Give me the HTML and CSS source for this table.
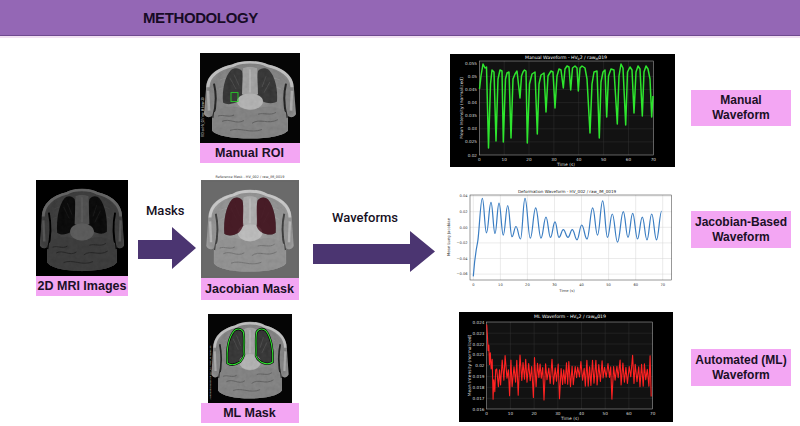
FILE: index.html
```html
<!DOCTYPE html>
<html lang="en">
<head>
<meta charset="utf-8">
<title>Methodology</title>
<link rel="stylesheet" href="styles.css">
</head>
<body>
<svg class="defs" aria-hidden="true">
  <defs>
    <path id="lungL" d="M31 19 C25 26 22 40 23 55 C27 58 33 57 38 54 C40 52 42 49 43 46 C42 38 44 28 42 20 C39 16 34 16 31 19 Z"/>
    <path id="lungR" d="M69 19 C75 26 78 40 77 54 C73 57 67 56 63 54 C60 52 58 50 57 47 C58 38 56 28 58 20 C61 16 66 16 69 19 Z"/>
    <path id="bodyP" d="M6 40 C6 24 18 16 32 13 C40 8 60 8 68 13 C82 16 94 24 94 40 L96 68 C94 72 90 72 88 70 L88 86 C80 98 20 98 12 86 L12 70 C10 72 6 72 4 68 Z"/>
    <clipPath id="bodyClip"><use href="#bodyP"/></clipPath>
    <radialGradient id="bodyG" cx="50%" cy="50%" r="62%">
      <stop offset="0" stop-color="#8e8e8e"/>
      <stop offset=".75" stop-color="#7a7a7a"/>
      <stop offset="1" stop-color="#a8a8a8"/>
    </radialGradient>
    <filter id="soft" x="-5%" y="-5%" width="110%" height="110%"><feGaussianBlur stdDeviation="0.7"/></filter>
    <filter id="grain" x="0" y="0" width="100%" height="100%">
      <feTurbulence type="fractalNoise" baseFrequency="0.22" numOctaves="2" seed="7"/>
      <feColorMatrix type="saturate" values="0"/>
      <feComponentTransfer><feFuncA type="linear" slope="0" intercept="1"/></feComponentTransfer>
    </filter>
    <g id="chest">
      <rect class="scan-bg" width="100" height="100"/>
      <g filter="url(#soft)">
        <use href="#bodyP" fill="url(#bodyG)"/>
        <path d="M8 38 C8 25 20 17 33 14 C41 9 59 9 67 14 C80 17 92 25 92 38" fill="none" stroke="#d2d2d2" stroke-width="3" opacity=".75"/>
        <path d="M8 42 L9 64 M92 42 L91 64" stroke="#c4c4c4" stroke-width="2.6" opacity=".6"/>
        <path d="M14 34 C17 48 16 60 13 72 M86 34 C83 48 84 60 87 72" fill="none" stroke="#141414" stroke-width="2"/>
        <path d="M14 66 C25 56 40 60 50 64 C60 60 75 56 86 66 L88 86 C80 98 20 98 12 86 Z" fill="#7b7b7b"/>
        <path d="M20 30 C28 26 36 28 42 32 M58 32 C64 28 72 26 80 30 M19 40 C27 36 35 38 42 42 M58 42 C65 38 73 36 81 40" stroke="#9a9a9a" stroke-width=".8" fill="none" opacity=".6"/>
        <use href="#lungL" fill="#2a2a2a"/>
        <use href="#lungR" fill="#2a2a2a"/>
        <path d="M30 28 L36 40 M34 24 L39 36 M66 26 L62 38 M70 32 L64 44" stroke="#4a4a4a" stroke-width=".7" fill="none"/>
        <path d="M43 17 C47 15 53 15 57 17 L58 46 L42 46 Z" fill="#9e9e9e"/>
        <path d="M50 18 L50 44" stroke="#c8c8c8" stroke-width="1.2" opacity=".6"/>
        <ellipse cx="50" cy="54" rx="13" ry="9" fill="#b0b0b0"/>
        <path d="M22 76 C30 72 36 80 44 75 M52 78 C60 72 68 80 78 74 M30 86 C40 82 50 90 62 85 M18 70 C24 68 28 72 34 69 M58 68 C64 66 70 70 76 66" stroke="#555" stroke-width="1" fill="none"/>
      </g>
      <rect class="grain" width="100" height="100" clip-path="url(#bodyClip)" filter="url(#grain)"/>
    </g>
  </defs>
</svg>

<header class="top"><h1>METHODOLOGY</h1></header>

<main class="flow">
  <section class="col col-input">
    <figure class="card">
      <svg class="scan scan-mri" viewBox="0 0 100 100" preserveAspectRatio="none">
        <use href="#chest"/>
      </svg>
      <figcaption class="tag tag-input">2D MRI Images</figcaption>
    </figure>
  </section>

  <section class="col col-arrow1">
    <span class="arrow-label">Masks</span>
    <svg class="arrow arrow1" viewBox="0 0 58 42"><polygon points="0,13 34,13 34,0 58,21 34,42 34,32 0,32"/></svg>
  </section>

  <section class="col col-masks">
    <figure class="card roi">
      <svg class="scan scan-roi" viewBox="0 0 100 100" preserveAspectRatio="none">
        <use href="#chest"/>
        <rect x="31" y="44" width="7" height="10" fill="none" stroke="#27d627" stroke-width=".9"/>
        <text class="side-note" transform="translate(3.6 93) rotate(-90)">ROI on HV_02 / raw_M frame 30</text>
      </svg>
      <figcaption class="tag tag-mask">Manual ROI</figcaption>
    </figure>

    <figure class="card jac">
      <svg class="scan-jac" viewBox="0 0 98 106">
        <text class="fig-title" x="49" y="5.5">Reference Mask - HV_002 / raw_IM_0019</text>
        <rect x="0" y="8" width="98" height="98" fill="#6a6a6a"/>
        <svg x="1.5" y="9.5" width="95" height="95" viewBox="0 0 100 100" preserveAspectRatio="none">
          <use href="#chest"/>
          <rect width="100" height="100" fill="#fff" opacity=".12"/>
          <use href="#lungL" fill="#45131f" opacity=".85"/>
          <use href="#lungR" fill="#45131f" opacity=".85"/>
        </svg>
      </svg>
      <figcaption class="tag tag-jac">Jacobian Mask</figcaption>
    </figure>

    <figure class="card ml">
      <svg class="scan scan-ml" viewBox="0 0 100 100" preserveAspectRatio="none">
        <use href="#chest"/>
        <use href="#lungL" fill="none" stroke="#000" stroke-width="2.6"/>
        <use href="#lungR" fill="none" stroke="#000" stroke-width="2.6"/>
        <use href="#lungL" fill="none" stroke="#2fe02f" stroke-width="1.3"/>
        <use href="#lungR" fill="none" stroke="#2fe02f" stroke-width="1.3"/>
        <text class="side-note" transform="translate(3.6 96) rotate(-90)">Automated Mask on HV_02 / raw_M frame 30</text>
      </svg>
      <figcaption class="tag tag-mask">ML Mask</figcaption>
    </figure>
  </section>

  <section class="col col-arrow2">
    <span class="arrow-label">Waveforms</span>
    <svg class="arrow arrow2" viewBox="0 0 123 41"><polygon points="0,13 97,13 97,0 122,20.5 97,41 97,33 0,33"/></svg>
  </section>

  <section class="col col-charts">
    <svg class="chart chart-manual" viewBox="0 0 225 113">
      <rect width="225" height="113" fill="#000"/>
      <rect x="29.3" y="7" width="174" height="94" fill="#121212"/>
      <g class="grid-dark">
        <path d="M54.2 7V101M79 7V101M103.9 7V101M128.7 7V101M153.6 7V101M178.5 7V101M29.3 22.4H203.3M29.3 35.5H203.3M29.3 48.6H203.3M29.3 61.7H203.3M29.3 74.8H203.3M29.3 87.9H203.3"/>
      </g>
      <rect x="29.3" y="7" width="174" height="94" fill="none" stroke="#bbb" stroke-width=".5"/>
      <g class="tick-w ytick">
        <text x="27" y="10.8">0.055</text><text x="27" y="23.9">0.05</text><text x="27" y="37">0.045</text><text x="27" y="50.1">0.04</text>
        <text x="27" y="63.2">0.035</text><text x="27" y="76.3">0.03</text><text x="27" y="89.4">0.025</text><text x="27" y="102.5">0.02</text>
      </g>
      <g class="tick-w xtick">
        <text x="29.3" y="106.6">0</text><text x="54.2" y="106.6">10</text><text x="79" y="106.6">20</text><text x="103.9" y="106.6">30</text>
        <text x="128.7" y="106.6">40</text><text x="153.6" y="106.6">50</text><text x="178.5" y="106.6">60</text><text x="203.3" y="106.6">70</text>
      </g>
      <text class="lab-w" x="116" y="111.8">Time (s)</text>
      <text class="lab-w" transform="translate(12.5 54) rotate(-90)">Mean Intensity (normalized)</text>
      <text class="title-w" x="116" y="5.3">Manual  Waveform - HV<tspan class="sub" dy="0.8">0</tspan><tspan dy="-0.8">2 / raw</tspan><tspan class="sub" dy="0.8">M</tspan><tspan dy="-0.8">019</tspan></text>
      <polyline class="line-green" points="29.5,35 31,22 33,10 35,14 36.5,13 38.5,94 40.5,30 42,16 44,18 46,87 48,25 50,16 52,17 53.3,88 55.5,25 57,19 59,18 61,84 63,25 65,20 67,17 70,44 71.5,22 73,18 74.5,16 76,17 77.3,89 79.5,30 82,20 85,18 87.3,80 89,30 91,21 94,19 96,58 98,22 101,17 103,18 105,54 107,22 109,15 111,16 113.3,34 115,15 117,12 119,13 120.7,36 122.5,14 125,12 127,14 128.3,37 130,14 132,12 135,14 137,25 140,79 142,30 144,18 147,17 149.3,84 151,28 153,18 155,16 156.7,63 158.5,22 161,15 164,16 167.3,70 169,22 171,10 173,14 175.7,71 177.5,18 180,13 182,16 184,59 186,18 188,12 190,15 192.3,62 194,18 196,12 198,15 200,25 201.7,63 203,42"/>
    </svg>

    <svg class="chart chart-jac" viewBox="440 185 250 112">
      <rect x="440" y="185" width="250" height="112" fill="#fff"/>
      <g class="grid-light">
        <path d="M473.3 195V280M500.4 195V280M527.4 195V280M554.5 195V280M581.5 195V280M608.6 195V280M635.7 195V280M662.7 195V280M470 196.1H671.7M470 211.7H671.7M470 227.3H671.7M470 242.9H671.7M470 258.5H671.7M470 274.1H671.7"/>
      </g>
      <rect x="470" y="195" width="201.7" height="85" fill="none" stroke="#333" stroke-width=".5"/>
      <g class="tick-d ytick">
        <text x="467.5" y="197.4">0.04</text><text x="467.5" y="213">0.02</text><text x="467.5" y="228.6">0.00</text>
        <text x="467.5" y="244.2">−0.02</text><text x="467.5" y="259.8">−0.04</text><text x="467.5" y="275.4">−0.06</text>
      </g>
      <g class="tick-d xtick">
        <text x="473.3" y="285.5">0</text><text x="500.4" y="285.5">10</text><text x="527.4" y="285.5">20</text><text x="554.5" y="285.5">30</text>
        <text x="581.5" y="285.5">40</text><text x="608.6" y="285.5">50</text><text x="635.7" y="285.5">60</text><text x="662.7" y="285.5">70</text>
      </g>
      <text class="lab-d" x="567" y="291.5">Time (s)</text>
      <text class="lab-d" transform="translate(450 237) rotate(-90)">Mean Lung Jacobian</text>
      <text class="title-d" x="567" y="192.5">Deformation Waveform - HV_002 / raw_IM_0019</text>
      <path id="jac-line" class="line-blue" d=""/>
    </svg>

    <svg class="chart chart-ml" viewBox="459 312 214 110">
      <rect x="459" y="312" width="214" height="110" fill="#000"/>
      <rect x="486.7" y="322" width="166" height="87" fill="#121212"/>
      <g class="grid-dark">
        <path d="M510.4 322V409M534.1 322V409M557.8 322V409M581.5 322V409M605.2 322V409M628.9 322V409M486.7 333.2H652.7M486.7 344H652.7M486.7 354.9H652.7M486.7 365.7H652.7M486.7 376.6H652.7M486.7 387.4H652.7M486.7 398.3H652.7"/>
      </g>
      <rect x="486.7" y="322" width="166" height="87" fill="none" stroke="#bbb" stroke-width=".5"/>
      <g class="tick-w ytick">
        <text x="484.5" y="323.8">0.024</text><text x="484.5" y="334.7">0.023</text><text x="484.5" y="345.5">0.022</text>
        <text x="484.5" y="356.4">0.021</text><text x="484.5" y="367.2">0.02</text><text x="484.5" y="378.1">0.019</text>
        <text x="484.5" y="388.9">0.018</text><text x="484.5" y="399.8">0.017</text><text x="484.5" y="410.6">0.016</text>
      </g>
      <g class="tick-w xtick">
        <text x="486.7" y="414.6">0</text><text x="510.4" y="414.6">10</text><text x="534.1" y="414.6">20</text><text x="557.8" y="414.6">30</text>
        <text x="581.5" y="414.6">40</text><text x="605.2" y="414.6">50</text><text x="628.9" y="414.6">60</text><text x="652.7" y="414.6">70</text>
      </g>
      <text class="lab-w" x="570" y="420.3">Time (s)</text>
      <text class="lab-w" transform="translate(470.5 365.5) rotate(-90)">Mean Intensity (normalized)</text>
      <text class="title-w" x="570" y="318">ML  Waveform - HV<tspan class="sub" dy="0.8">0</tspan><tspan dy="-0.8">2 / raw</tspan><tspan class="sub" dy="0.8">M</tspan><tspan dy="-0.8">019</tspan></text>
      <polyline id="ml-line" class="line-red" points=""/>
    </svg>
  </section>

  <section class="col col-tags">
    <div class="tag tag-wave t-manual">Manual<br>Waveform</div>
    <div class="tag tag-wave t-jac">Jacobian-Based<br>Waveform</div>
    <div class="tag tag-wave t-ml">Automated (ML)<br>Waveform</div>
  </section>
</main>
<script src="script.js"></script>
</body>
</html>
```

FILE: styles.css
```css
html, body {
  margin: 0;
  padding: 0;
}
body {
  width: 800px;
  height: 426px;
  overflow: hidden;
  background: #ffffff;
  font-family: "Liberation Sans", Arial, sans-serif;
  color: #1a1026;
}
.defs {
  position: absolute;
  width: 0;
  height: 0;
  overflow: hidden;
}
.scan-bg { fill: var(--scan-bg, #050505); }
.grain { opacity: 0.1; }

.top {
  height: 35px;
  background: #9467b5;
  border-bottom: 1px solid #6f4a8f;
  box-shadow: 0 2px 0 #f2e2f2;
  display: flex;
  align-items: center;
  padding-left: 143px;
}
.top h1 {
  margin: 0;
  font-size: 15px;
  font-weight: 700;
  letter-spacing: -0.4px;
  color: #170b25;
}

.flow {
  display: flex;
  align-items: flex-start;
  margin-top: 2px;
  height: 388px;
}
.col {
  display: flex;
  flex-direction: column;
}
figure { margin: 0; }
.card {
  display: flex;
  flex-direction: column;
  align-items: center;
}
.tag {
  background: #f3a6f3;
  font-weight: 700;
  font-size: 12.5px;
  text-align: center;
  display: flex;
  align-items: center;
  justify-content: center;
  color: #1a1026;
}

/* column 1 */
.col-input { margin-left: 36px; width: 92px; padding-top: 142px; }
.scan { display: block; }
.scan-mri { width: 92px; height: 96px; filter: brightness(0.55) contrast(1.2); }
.tag-input { width: 92px; height: 20px; }

/* arrows */
.arrow-label {
  font-family: Roboto, "Liberation Sans", sans-serif;
  font-weight: 500;
  font-size: 13px;
  line-height: 15px;
  color: #16101e;
  white-space: nowrap;
}
.arrow polygon { fill: #4b3571; }
.arrow { display: block; }
.col-arrow1 { margin-left: 10px; width: 58px; padding-top: 165px; }
.col-arrow1 .arrow-label { padding-left: 8px; }
.arrow1 { width: 58px; height: 42px; margin-top: 9px; }
.col-arrow2 { margin-left: 13px; width: 123px; padding-top: 172px; }
.col-arrow2 .arrow-label { padding-left: 19px; }
.arrow2 { width: 123px; height: 41px; margin-top: 6px; }

/* column 2 */
.col-masks { margin-left: 3px; width: 101px; align-items: center; }
.roi { margin-top: 15px; width: 100px; }
.scan-roi { width: 100px; height: 90px; }
.tag-mask { width: 100px; height: 20px; }
.jac { margin-top: 9px; width: 98px; }
.scan-jac { display: block; width: 98px; height: 106px; --scan-bg: #565656; }
.tag-jac { width: 98px; height: 22px; }
.ml { margin-top: 14px; width: 98px; }
.scan-ml { width: 84px; height: 89px; }
.ml .tag-mask { width: 98px; }

.side-note { font-family: "Liberation Sans", sans-serif; font-size: 3px; fill: #dcdcdc; }
.fig-title { font-family: "DejaVu Sans", sans-serif; font-size: 3.4px; fill: #333; text-anchor: middle; }

/* charts */
.col-charts { margin-left: 4px; width: 250px; }
.chart { display: block; }
.chart-manual { margin: 16px 0 0 10px; width: 225px; height: 113px; }
.chart-jac { margin-top: 18px; width: 250px; height: 112px; }
.chart-ml { margin: 15px 0 0 19px; width: 214px; height: 110px; }

.grid-dark path { stroke: #363636; stroke-width: 0.45; fill: none; }
.grid-light path { stroke: #d6d6d6; stroke-width: 0.5; fill: none; }
.chart text { font-family: "DejaVu Sans", sans-serif; }
.tick-w text { fill: #dddddd; font-size: 4.2px; }
.tick-d text { fill: #333333; font-size: 3.6px; }
.ytick text { text-anchor: end; }
.xtick text { text-anchor: middle; }
.lab-w { fill: #dddddd; font-size: 4.4px; text-anchor: middle; }
.lab-d { fill: #333333; font-size: 3.8px; text-anchor: middle; }
.title-w { fill: #ffffff; font-size: 4.6px; text-anchor: middle; }
.title-d { fill: #222222; font-size: 4.1px; text-anchor: middle; }
.sub { font-size: 3.2px; }
.line-green { fill: none; stroke: #2ee52e; stroke-width: 1.5; stroke-linejoin: round; }
.line-blue { fill: none; stroke: #3a7dc2; stroke-width: 1.2; stroke-linejoin: round; }
.line-red { fill: none; stroke: #ff2222; stroke-width: 1.1; stroke-linejoin: round; }

/* column 4 */
.col-tags { margin-left: 1px; width: 100px; }
.tag-wave { font-size: 12px; line-height: 15px; }
.t-manual { margin-top: 52px; height: 36px; }
.t-jac { margin-top: 85px; height: 37px; }
.t-ml { margin-top: 101px; height: 37px; }
```

FILE: script.js
```js
(function () {
  // Jacobian waveform: smooth curve through alternating peaks and troughs
  var pts = [[482.3,198.4],[486.5,232.8],[491,202.3],[495,233.5],[499,203.1],[503.3,235.1],[507.7,205.5],[512,236.7],[516,226.5],[520.5,239],[525,198.4],[530.3,238.2],[535.7,207.8],[541,238.2],[546,217.2],[550.5,237.4],[555,221.8],[559,237.4],[563.3,229.6],[568,237.4],[572.3,229.6],[577,239.8],[581.7,225],[587,239],[592.7,207.8],[597.5,235.1],[602.7,200.8],[607.5,237.4],[612.3,214],[617.5,242.1],[623.3,211.7],[628,237.4],[632.7,213.3],[637.5,239],[642.3,217.2],[647,239.8],[651.7,214],[656.5,239.8],[661.7,211]];
  var d = "M473.3 276.4 L474.6 262 L476.2 250 L477.8 241 C479.2 232 480.6 198.4 482.3 198.4";
  for (var i = 1; i < pts.length; i++) {
    var a = pts[i - 1], b = pts[i], k = (b[0] - a[0]) * 0.42;
    d += " C" + (a[0] + k).toFixed(1) + " " + a[1] + " " + (b[0] - k).toFixed(1) + " " + b[1] + " " + b[0] + " " + b[1];
  }
  document.getElementById("jac-line").setAttribute("d", d);

  // ML waveform: noisy signal
  var s = 12345;
  function rnd() { s = (s * 16807) % 2147483647; return s / 2147483647; }
  function X(t) { return 486.7 + t * 2.371; }
  function Y(v) { return 322.3 + (0.024 - v) * 10850; }
  var data = [[0,0.0238],[0.3,0.0228],[0.6,0.0214],[0.9,0.0219],[1.2,0.0201],[1.5,0.0212],[1.9,0.0197],[2.3,0.0206],[2.7,0.0169],[3.0,0.0187],[3.4,0.0176],[3.8,0.0196]];
  var dips = [10, 13.1, 19.2, 24, 30.2, 47.3, 53.2, 69.6];
  var spikes = [8, 13.6, 20.5, 48, 62, 68.6];
  var t = 4.2, up = true;
  function near(list, x) { for (var j = 0; j < list.length; j++) { if (Math.abs(list[j] - x) < 0.6) return true; } return false; }
  while (t <= 70) {
    var amp = 0.0003 + rnd() * 0.001;
    var v = 0.0193 + (up ? amp : -amp);
    if (!up && near(dips, t)) v = 0.0168 + rnd() * 0.0005;
    if (up && near(spikes, t)) v = 0.0207 + rnd() * 0.0003;
    data.push([t, v]);
    t += 0.45 + rnd() * 0.35;
    up = !up;
  }
  document.getElementById("ml-line").setAttribute("points", data.map(function (p) { return X(p[0]).toFixed(1) + "," + Y(p[1]).toFixed(1); }).join(" "));
})();
```
